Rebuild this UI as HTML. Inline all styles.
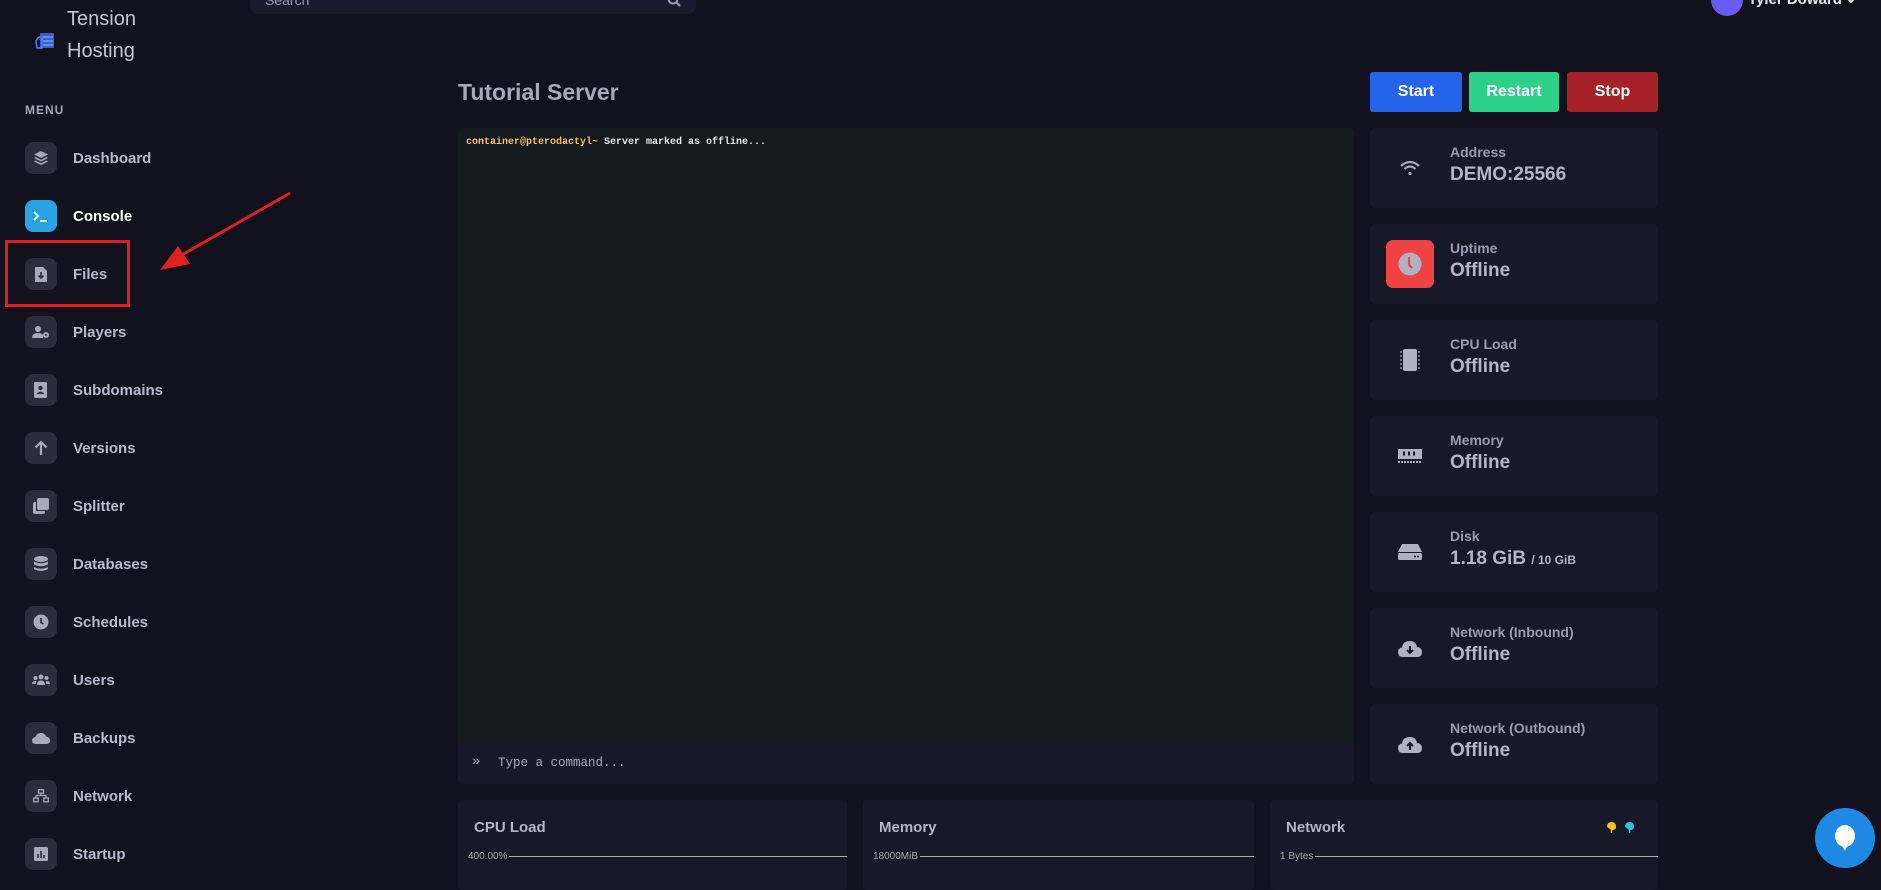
<!DOCTYPE html>
<html><head><meta charset="utf-8"><style>
*{margin:0;padding:0;box-sizing:border-box}
body{width:1881px;height:882px;overflow:hidden;background:#12121f;font-family:"Liberation Sans",sans-serif;color:#c4c6d4;position:relative}
.abs{position:absolute}
.nav{position:absolute;left:25px;width:200px;height:32px}
.nav .ic{position:absolute;left:0;top:0;width:32px;height:32px;border-radius:8px;background:#2c2d3c;display:flex;align-items:center;justify-content:center}
.nav .t{position:absolute;left:48px;top:8px;font-size:15px;font-weight:bold;color:#b8bacb}
.card{position:absolute;left:1370px;width:288px;height:80px;background:#181928;border-radius:5px}
.card .ib{position:absolute;left:16px;top:16px;width:48px;height:48px;border-radius:7px;display:flex;align-items:center;justify-content:center}
.card .l{position:absolute;left:80px;top:16px;font-size:14px;font-weight:bold;color:#9a9caf}
.card .v{position:absolute;left:80px;top:36px;font-size:19px;font-weight:bold;color:#b4b6c6}
.btn{position:absolute;top:72px;height:40px;border-radius:3px;color:#fff;font-weight:bold;font-size:16px;display:flex;align-items:center;justify-content:center}
.bc{position:absolute;top:800px;height:90px;background:#181928;border-radius:4px}
.bc .h{position:absolute;left:16px;top:19px;font-size:15px;font-weight:bold;color:#b4b6c6}
.bc .y{position:absolute;left:10px;top:51px;font-size:10px;color:#aaa;display:flex;align-items:center;width:calc(100% - 10px)}
.bc .y span{flex:1;height:1px;background:#aaa;margin-left:2px}
</style></head><body>
<svg class="abs" style="left:34px;top:31px" width="22" height="20" viewBox="0 0 22 20"><rect x="6" y="2" width="14" height="15" rx="1" fill="#3b5fd0"/><path d="M2 10 Q4 5 8 6 L8 17 L3 17 Z" fill="none" stroke="#4f7ef0" stroke-width="1.5"/><line x1="9" y1="6" x2="19" y2="6" stroke="#9ab4ff"/><line x1="9" y1="10" x2="19" y2="10" stroke="#9ab4ff"/><line x1="9" y1="14" x2="19" y2="14" stroke="#9ab4ff"/></svg>
<div class="abs" style="left:67px;top:3px;font-size:20px;line-height:32px;color:#c4c6d4">Tension<br>Hosting</div>
<div class="abs" style="left:25px;top:103px;font-size:12px;font-weight:bold;letter-spacing:1px;color:#a5a7b8">MENU</div>

<div class="nav" style="top:142px"><div class="ic"><svg width="16" height="16" viewBox="0 0 16 16" fill="#a8aabb"><path d="M8 1 L15 4.5 L8 8 L1 4.5Z"/><path d="M2.5 7 L8 9.8 L13.5 7 L15 8 L8 11.5 L1 8Z"/><path d="M2.5 10.5 L8 13.3 L13.5 10.5 L15 11.5 L8 15 L1 11.5Z"/></svg></div><div class="t">Dashboard</div></div>
<div class="nav" style="top:200px"><div class="ic" style="background:#29a2e2"><svg width="18" height="14" viewBox="0 0 18 14"><path d="M2 3 L6 7 L2 11" stroke="#fff" stroke-width="1.8" fill="none"/><line x1="8" y1="12" x2="15" y2="12" stroke="#fff" stroke-width="1.8"/></svg></div><div class="t" style="color:#fff">Console</div></div>
<div class="nav" style="top:258px"><div class="ic"><svg width="12" height="16" viewBox="0 0 12 16"><path d="M0 1 H8 L12 5 V16 H0Z" fill="#a8aabb"/><path d="M6 6 V12 M3.5 9.5 L6 12 L8.5 9.5" stroke="#2c2d3c" stroke-width="1.6" fill="none"/></svg></div><div class="t">Files</div></div>
<div class="nav" style="top:316px"><div class="ic"><svg width="18" height="14" viewBox="0 0 18 14" fill="#a8aabb"><circle cx="6" cy="4" r="3"/><path d="M0 13 Q0 8 6 8 Q10 8 11 10 L11 13Z"/><circle cx="14" cy="10" r="3"/><circle cx="14" cy="10" r="1" fill="#2c2d3c"/></svg></div><div class="t">Players</div></div>
<div class="nav" style="top:374px"><div class="ic"><svg width="14" height="16" viewBox="0 0 14 16" fill="#a8aabb"><rect x="0" y="0" width="13" height="16" rx="1.5"/><circle cx="6.5" cy="6" r="2.2" fill="#2c2d3c"/><path d="M2.5 12 Q6.5 7.5 10.5 12Z" fill="#2c2d3c"/></svg></div><div class="t">Subdomains</div></div>
<div class="nav" style="top:432px"><div class="ic"><svg width="14" height="16" viewBox="0 0 14 16"><path d="M7 15 V2 M1.5 7.5 L7 2 L12.5 7.5" stroke="#a8aabb" stroke-width="2.2" fill="none"/></svg></div><div class="t">Versions</div></div>
<div class="nav" style="top:490px"><div class="ic"><svg width="16" height="16" viewBox="0 0 16 16" fill="#a8aabb"><rect x="4" y="0" width="12" height="12" rx="2"/><path d="M0 6 Q0 4 2 4 L3 4 L3 13 L12 13 L12 14 Q12 16 10 16 L2 16 Q0 16 0 14Z"/></svg></div><div class="t">Splitter</div></div>
<div class="nav" style="top:548px"><div class="ic"><svg width="14" height="16" viewBox="0 0 14 16" fill="#a8aabb"><ellipse cx="7" cy="3" rx="7" ry="3"/><path d="M0 5.5 Q7 9 14 5.5 V8.5 Q7 12 0 8.5Z"/><path d="M0 11 Q7 14.5 14 11 V13 Q7 17 0 13Z"/></svg></div><div class="t">Databases</div></div>
<div class="nav" style="top:606px"><div class="ic"><svg width="16" height="16" viewBox="0 0 16 16"><circle cx="8" cy="8" r="7.5" fill="#a8aabb"/><path d="M8 4 V8.5 L10.5 10" stroke="#2c2d3c" stroke-width="1.6" fill="none"/></svg></div><div class="t">Schedules</div></div>
<div class="nav" style="top:664px"><div class="ic"><svg width="18" height="12" viewBox="0 0 18 12" fill="#a8aabb"><circle cx="9" cy="3" r="2.5"/><circle cx="3.5" cy="4" r="2"/><circle cx="14.5" cy="4" r="2"/><path d="M5 11 Q5 6.5 9 6.5 Q13 6.5 13 11Z"/><path d="M0 10 Q0 7 3.5 7 L4.5 7 Q3.5 8.5 3.8 10Z"/><path d="M18 10 Q18 7 14.5 7 L13.5 7 Q14.5 8.5 14.2 10Z"/></svg></div><div class="t">Users</div></div>
<div class="nav" style="top:722px"><div class="ic"><svg width="18" height="12" viewBox="0 0 18 12" fill="#a8aabb"><path d="M4 12 Q0 12 0 8.5 Q0 5.5 3.5 5 Q4.5 1 9 1 Q13 1 14 4.5 Q18 5 18 8.5 Q18 12 14 12Z"/></svg></div><div class="t">Backups</div></div>
<div class="nav" style="top:780px"><div class="ic"><svg width="16" height="14" viewBox="0 0 16 14" fill="none" stroke="#a8aabb" stroke-width="1.3"><rect x="5.5" y="0.7" width="5" height="3.5"/><path d="M8 4.2 V6.5 M3 9 V6.5 H13 V9"/><rect x="0.7" y="9" width="4.5" height="3.8"/><rect x="10.8" y="9" width="4.5" height="3.8"/></svg></div><div class="t">Network</div></div>
<div class="nav" style="top:838px"><div class="ic"><svg width="14" height="14" viewBox="0 0 14 14"><rect width="14" height="14" rx="1.5" fill="#a8aabb"/><path d="M4 11 V7 M7 11 V4 M10 11 V8" stroke="#2c2d3c" stroke-width="1.6"/></svg></div><div class="t">Startup</div></div>

<div class="abs" style="left:5px;top:240px;width:125px;height:67px;border:3px solid #e11d1d"></div>
<svg class="abs" style="left:0;top:0" width="320" height="340"><line x1="290" y1="193" x2="180" y2="256" stroke="#e02020" stroke-width="3"/><polygon points="160,270 178,246 190,264" fill="#e02020"/></svg>

<div class="abs" style="left:250px;top:-20px;width:446px;height:34px;background:#1a1b2e;border-radius:8px"></div>
<div class="abs" style="left:265px;top:-8px;font-size:14px;color:#9a9cae">Search</div>
<svg class="abs" style="left:667px;top:-6px" width="14" height="14"><circle cx="6" cy="5" r="4.5" stroke="#9a9cae" stroke-width="2" fill="none"/><line x1="9.5" y1="8.5" x2="13" y2="12" stroke="#9a9cae" stroke-width="2"/></svg>
<div class="abs" style="left:1711px;top:-16px;width:32px;height:32px;border-radius:50%;background:#6a5cf0"></div>
<div class="abs" style="left:1748px;top:-9px;font-size:15px;font-weight:bold;color:#e6e6ee">Tyler Doward</div>
<svg class="abs" style="left:1846px;top:-2px" width="10" height="6"><path d="M1 0 L5 4 L9 0" stroke="#ddd" stroke-width="2" fill="none"/></svg>

<div class="abs" style="left:458px;top:79px;font-size:23px;font-weight:bold;color:#a7a9b9">Tutorial Server</div>
<div class="btn" style="left:1370px;width:92px;background:#2563eb">Start</div>
<div class="btn" style="left:1469px;width:90px;background:#2dd088">Restart</div>
<div class="btn" style="left:1567px;width:91px;background:#a62027">Stop</div>

<div class="abs" style="left:458px;top:128px;width:896px;height:656px;background:#181928;border-radius:4px;overflow:hidden">
<div style="height:615px;background:#141a1f"></div>
<div class="abs" style="left:8px;top:9px;font-family:'Liberation Mono',monospace;font-size:10px;font-weight:bold;color:#e8e8e8"><span style="color:#f0c060">container@pterodactyl~</span> Server marked as offline...</div>
<div class="abs" style="left:14px;top:626px;font-family:'Liberation Mono',monospace;font-size:14px;color:#a8aab8">»</div>
<div class="abs" style="left:40px;top:628px;font-family:'Liberation Mono',monospace;font-size:12.5px;color:#a8aab8">Type a command...</div>
</div>

<div class="card" style="top:128px"><div class="ib"><svg width="22" height="16" viewBox="0 0 22 16" fill="none" stroke="#a8aabb" stroke-width="2.2"><path d="M2 6 Q11 -2 20 6"/><path d="M5.5 9 Q11 4 16.5 9"/><circle cx="11" cy="13.5" r="1.6" fill="#a8aabb" stroke="none"/></svg></div><div class="l">Address</div><div class="v">DEMO:25566</div></div>
<div class="card" style="top:224px"><div class="ib" style="background:#ef4444"><svg width="24" height="24"><circle cx="12" cy="12" r="11.5" fill="#b0b2c0"/><path d="M11 5 V12.5 L14 16" stroke="#ef4444" stroke-width="2.2" fill="none"/></svg></div><div class="l">Uptime</div><div class="v">Offline</div></div>
<div class="card" style="top:320px"><div class="ib"><svg width="24" height="24" viewBox="0 0 24 24"><rect x="5" y="1" width="14" height="22" rx="2" fill="#b0b2c0"/><path d="M2 4H4M2 8H4M2 12H4M2 16H4M2 20H4M20 4H22M20 8H22M20 12H22M20 16H22M20 20H22" stroke="#b0b2c0" stroke-width="1.3"/></svg></div><div class="l">CPU Load</div><div class="v">Offline</div></div>
<div class="card" style="top:416px"><div class="ib"><svg width="24" height="16" viewBox="0 0 24 16"><rect x="0" y="1" width="24" height="10" fill="#b0b2c0"/><rect x="5" y="3.5" width="2" height="4" fill="#181928"/><rect x="10" y="3.5" width="2" height="4" fill="#181928"/><rect x="15" y="3.5" width="2" height="4" fill="#181928"/><path d="M0 14 H24" stroke="#b0b2c0" stroke-width="2" stroke-dasharray="2 1"/></svg></div><div class="l">Memory</div><div class="v">Offline</div></div>
<div class="card" style="top:512px"><div class="ib"><svg width="24" height="18" viewBox="0 0 24 18"><path d="M4 1 H20 L24 9 H0Z" fill="#b0b2c0"/><rect x="0" y="10" width="24" height="7" rx="1.5" fill="#b0b2c0"/><circle cx="17" cy="13.5" r="1" fill="#181928"/><circle cx="20" cy="13.5" r="1" fill="#181928"/></svg></div><div class="l">Disk</div><div class="v">1.18 GiB <span style="font-size:12px">/ 10 GiB</span></div></div>
<div class="card" style="top:608px"><div class="ib"><svg width="24" height="18" viewBox="0 0 24 18"><path d="M5 18 Q0 18 0 13 Q0 9 4 8.5 Q5 2 12 2 Q18 2 19 8 Q24 8.5 24 13 Q24 18 19 18Z" fill="#b0b2c0"/><path d="M12 7 V14 M9 11 L12 14 L15 11" stroke="#181928" stroke-width="2" fill="none"/></svg></div><div class="l">Network (Inbound)</div><div class="v">Offline</div></div>
<div class="card" style="top:704px"><div class="ib"><svg width="24" height="18" viewBox="0 0 24 18"><path d="M5 18 Q0 18 0 13 Q0 9 4 8.5 Q5 2 12 2 Q18 2 19 8 Q24 8.5 24 13 Q24 18 19 18Z" fill="#b0b2c0"/><path d="M12 15 V8 M9 11 L12 8 L15 11" stroke="#181928" stroke-width="2" fill="none"/></svg></div><div class="l">Network (Outbound)</div><div class="v">Offline</div></div>

<div class="bc" style="left:458px;width:389px"><div class="h">CPU Load</div><div class="y">400.00%<span></span></div></div>
<div class="bc" style="left:863px;width:391px"><div class="h">Memory</div><div class="y">18000MiB<span></span></div></div>
<div class="bc" style="left:1270px;width:388px"><div class="h">Network</div><div class="y">1 Bytes<span></span></div>
<svg class="abs" style="left:335px;top:19px" width="34" height="16"><path d="M2 8 Q2 3 6.5 3 Q11 3 11 8 Q11 11 6.5 11Z" fill="#f5c518"/><path d="M6.5 5 V14" stroke="#f5c518" stroke-width="1.5"/><path d="M20 8 Q20 3 24.5 3 Q29 3 29 8 Q29 11 24.5 11Z" fill="#22c4e0"/><path d="M24.5 5 V14" stroke="#22c4e0" stroke-width="1.5"/></svg></div>

<div class="abs" style="left:1815px;top:808px;width:60px;height:60px;border-radius:50%;background:#1e88e5"></div>
<svg class="abs" style="left:1833px;top:824px" width="24" height="28"><ellipse cx="12" cy="12" rx="10" ry="11" fill="#fff"/><path d="M8 20 L12 27 L15 20Z" fill="#fff"/></svg>
</body></html>
